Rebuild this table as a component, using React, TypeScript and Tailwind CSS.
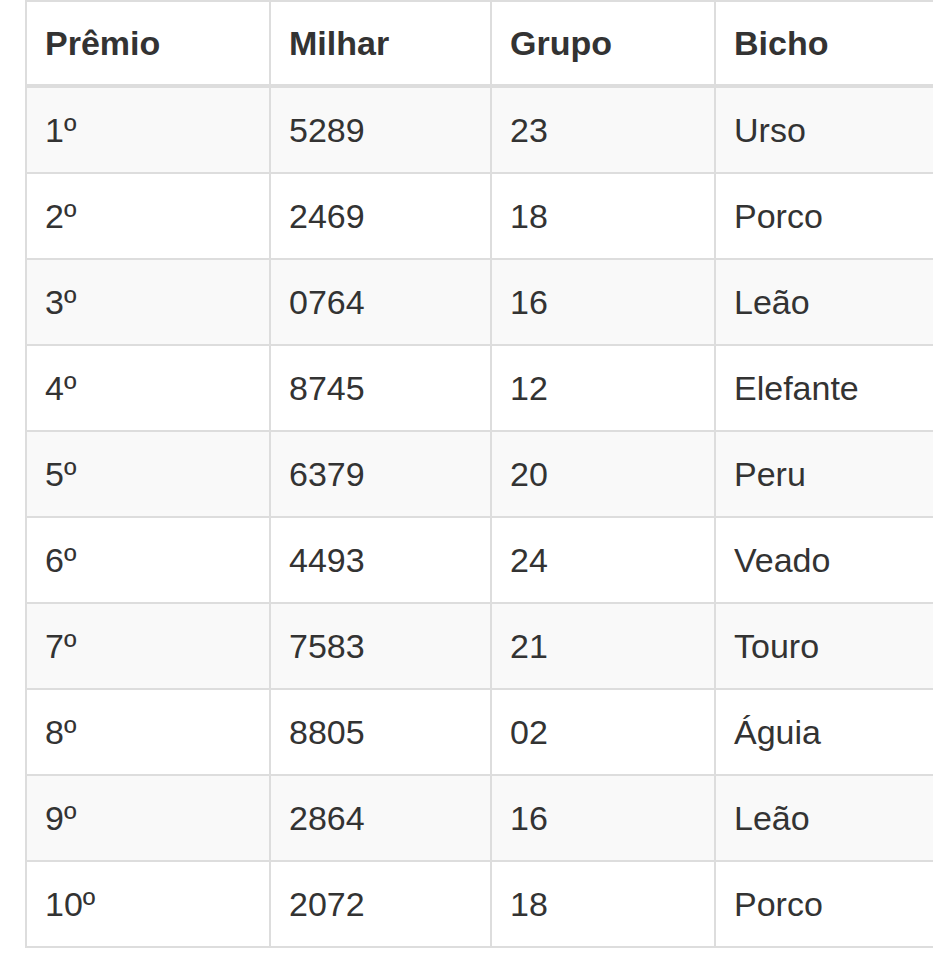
const rows = [
  ["1º", "5289", "23", "Urso"],
  ["2º", "2469", "18", "Porco"],
  ["3º", "0764", "16", "Leão"],
  ["4º", "8745", "12", "Elefante"],
  ["5º", "6379", "20", "Peru"],
  ["6º", "4493", "24", "Veado"],
  ["7º", "7583", "21", "Touro"],
  ["8º", "8805", "02", "Águia"],
  ["9º", "2864", "16", "Leão"],
  ["10º", "2072", "18", "Porco"],
]

const widths = ["w-[244px]", "w-[221px]", "w-[224px]", "w-[240px]"]

export default function App() {
  return (
    <div className="h-[965px] w-full overflow-hidden bg-white pl-[25px] font-['Liberation_Sans',Arial,sans-serif] text-[34px] leading-[46px] text-[#333]">
      <table className="w-[929px] table-fixed border-collapse border-2 border-[#ddd] text-left">
        <thead>
          <tr>
            {["Prêmio", "Milhar", "Grupo", "Bicho"].map((h, i) => (
              <th
                key={h}
                className={`${widths[i]} border-2 border-b-4 border-[#ddd] px-[18px] py-[18px] font-bold`}
              >
                {h}
              </th>
            ))}
          </tr>
        </thead>
        <tbody>
          {rows.map((r, i) => (
            <tr key={r[0]} className={i % 2 === 0 ? "bg-[#f9f9f9]" : "bg-white"}>
              {r.map((c, j) => (
                <td key={j} className="border-2 border-[#ddd] px-[18px] py-[19px] font-normal">
                  {c}
                </td>
              ))}
            </tr>
          ))}
        </tbody>
      </table>
    </div>
  )
}
